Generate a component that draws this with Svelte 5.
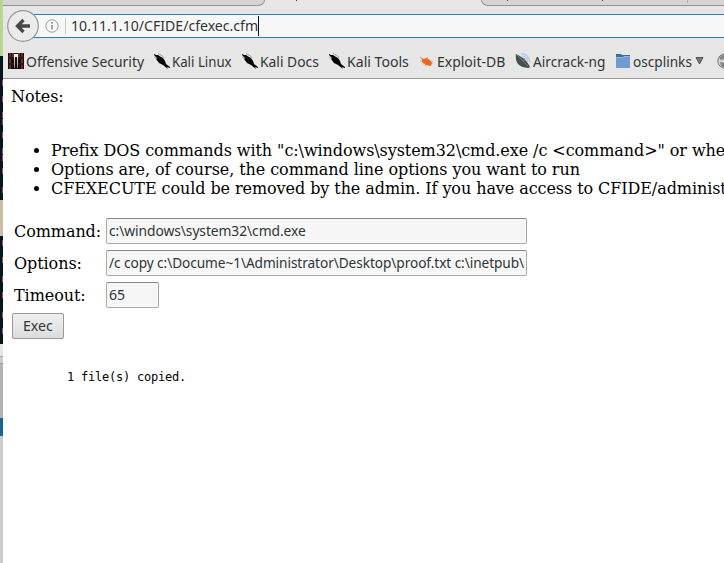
<script>
  const bookmarks = [
    { label: 'Offensive Security', icon: 'offsec', width: 118, gap: 10 },
    { label: 'Kali Linux', icon: 'dragon', width: 60, gap: 10 },
    { label: 'Kali Docs', icon: 'dragon', width: 59, gap: 10 },
    { label: 'Kali Tools', icon: 'dragon', width: 62, gap: 10 },
    { label: 'Exploit-DB', icon: 'bug', width: 68, gap: 10 },
    { label: 'Aircrack-ng', icon: 'dish', width: 72, gap: 10 },
    { label: 'oscplinks', icon: 'folder', width: 59, gap: 3 }
  ];
  const fields = [
    { label: 'Command:', value: 'c:\\windows\\system32\\cmd.exe', width: 421, text: 197 },
    { label: 'Options:', value: '/c copy c:\\Docume~1\\Administrator\\Desktop\\proof.txt c:\\inetpub\\', width: 421, text: 415 },
    { label: 'Timeout:', value: '65', width: 53, text: 16 }
  ];
  const stripes = [80, 96, 112, 119, 132, 148, 155, 168, 187, 240, 257, 276, 292, 312, 328];

  // Condenses a label horizontally to the given width.
  function fit(node, width) {
    const apply = () => {
      node.style.transform = 'none';
      node.style.transform = `scaleX(${width / node.offsetWidth})`;
    };
    apply();
    document.fonts?.ready.then(apply);
  }
</script>

<div class="desktop">
  <div class="behind">
    {#each stripes as y}<i style="top:{y}px"></i>{/each}
  </div>
  <main class="window">
    <header class="chrome">
      <div class="tabs">
        <div class="tab first"></div>
        <div class="active"><i></i></div>
        <div class="tab last"><i class="p1"></i><i class="p2"></i><i class="sep"></i></div>
      </div>
      <div class="nav">
        <div class="back">
          <svg width="32" height="32" viewBox="0 0 32 32"><circle cx="16" cy="16" r="15.3" fill="#ebebeb" stroke="#969696" stroke-width="1.2" /><path d="M16.5 10 10.5 16l6 6M11 16h12" fill="none" stroke="#484848" stroke-width="3.3" /></svg>
        </div>
        <div class="url">
          <svg class="info" width="14" height="14" viewBox="0 0 14 14"><circle cx="7" cy="7" r="6.2" fill="none" stroke="#999" /><path d="M7 6v4.5M7 3v1.700" stroke="#888" stroke-width="1.5" /></svg>
          <i class="divider"></i>
          <span class="slot" style="width:187px"><span class="fit" use:fit={187}>10.11.1.10/CFIDE/cfexec.cfm</span></span><i class="caret"></i>
        </div>
      </div>
      <div class="bookmarks">
        {#each bookmarks as b}
          <div class="bookmark" style="margin-right:{b.gap}px">
            <svg width="16" height="16" viewBox="0 0 16 16">
              {#if b.icon === 'offsec'}
                <path fill="#1b0808" d="M0 0h16v16H0z" /><path d="M2 0v16M5 0v4M11 0v4M14 0v16" stroke="#753c38" stroke-width="1.5" /><path d="M0 5h16M0 11h16" stroke="#301414" stroke-width="2" /><path fill="#eee" d="M6 1h4v14H6z" /><path fill="#111" d="M7 4h2l.5 11h-3z" />
              {:else if b.icon === 'dragon'}
                <path d="M0 1l2 1 2 0 3 2 2 1 2 3 1 3 4 3v1l-3-1 1 2-5-4-4-2-3-4 1-1-3-3z" fill="#050505" /><path d="m4 .5 4 2 2 2.500M0 4l3 2" stroke="#777" fill="none" stroke-width=".6" />
              {:else if b.icon === 'bug'}
                <path d="m2 5 3 1 2-1 4 2 2 3-1 3-5-1-4-3v-2z" fill="#ed6518" /><path d="M1 4l3 2M1 8h3M4 11l2-1M6 13l1-2M8 4l1 3M12 8h2M12 10l2 1" stroke="#e98855" stroke-width=".8" />
              {:else if b.icon === 'dish'}
                <path d="M6 1q7-1 9 8M7 3q5 0 6 6M7 5q3 0 4 4" stroke="#a9c3ed" stroke-width="1.2" fill="none" /><path d="M1 1Q-1 14 13 15q3 0 1-3Q10 5 1 1z" fill="#46504b" /><path d="m2 2 11 11M8 9l2-4" stroke="#7d8781" stroke-width=".8" />
              {:else}
                <path d="M1 1h5l1 1h8v4H1z" fill="#426b91" /><path d="M1 4h7l1-1h6v12H1z" fill="#719bcf" /><path d="M1 4.500h7l1-1h6" stroke="#91b4dc" fill="none" />
              {/if}
            </svg>
            <span class="slot" style="width:{b.width}px"><span class="fit" use:fit={b.width}>{b.label}</span></span>
          </div>
        {/each}
        <svg class="arrow" width="9" height="8" viewBox="0 0 9 8"><path d="M1 .5h7L4.500 7z" fill="#777" stroke="#555" /></svg>
        <svg class="globe" width="16" height="16" viewBox="0 0 16 16"><circle cx="8" cy="8" r="7.2" fill="#d6d6d6" stroke="#777" /><path d="M2 5q4-5 8-3L7 6 4 7zM3 9l6 1-2 5-3-2z" fill="#858585" /></svg>
      </div>
    </header>
    <section class="page">
      <div class="notes">Notes:</div>
      <ul>
        <li>Prefix DOS commands with "c:\windows\system32\cmd.exe /c &lt;command&gt;" or wherever cmd.exe is</li>
        <li>Options are, of course, the command line options you want to run</li>
        <li>CFEXECUTE could be removed by the admin. If you have access to CFIDE/administrator</li>
      </ul>
      {#each fields as f}
        <div class="row">
          <span class="label">{f.label}</span>
          <div class="input" style="width:{f.width}px"><span class="slot" style="width:{f.text}px"><span class="fit" use:fit={f.text}>{f.value}</span></span></div>
        </div>
      {/each}
      <button><span class="slot" style="width:30px"><span class="fit" use:fit={30}>Exec</span></span></button>
      <pre>1 file(s) copied.</pre>
    </section>
  </main>
</div>

<style>
  :global(body) { margin: 0; overflow: hidden; }
  .desktop { width: 724px; height: 563px; display: flex; overflow: hidden; background: #fff; }
  .behind { position: relative; width: 3px; flex: none; background: linear-gradient(#b9d394 0 56px, #07151c 56px 200px, #cbbda5 200px 236px, #07151c 236px 344px, #e5e5e5 344px 356px, #aaa 356px 357px, #ccc 357px 363px, #999 363px 364px, #b3b3b3 364px 418px, #176596 418px 436px, #ccc 436px); }
  .behind i { position: absolute; left: 2px; width: 1px; height: 6px; background: #a54650; }
  .window { width: 721px; flex: none; overflow: hidden; }
  .chrome { height: 79px; box-sizing: border-box; background: #e6e6e6; border-bottom: 1px solid #9a9a9a; }
  .tabs { height: 6px; display: flex; overflow: hidden; }
  .tab { box-sizing: border-box; background: #d5d5d5; border-bottom: 1px solid #929292; position: relative; }
  .first { width: 262px; border-right: 1px solid #929292; border-bottom-right-radius: 7px 6px; }
  .active { width: 216px; position: relative; }
  .last { width: 243px; border-left: 1px solid #929292; border-bottom-left-radius: 7px 6px; }
  .active i, .p1, .p2 { position: absolute; top: 0; width: 1px; height: 1px; background: #444; }
  .active i { left: 31px; }
  .p1 { left: 25px; } .p2 { left: 120px; }
  .sep { position: absolute; left: 205px; top: 0; width: 1px; height: 3px; background: #aaa; }
  .nav { height: 38px; display: flex; }
  .back { width: 32px; height: 32px; margin: 4px -7px 0 4px; position: relative; z-index: 1; }
  .back svg { display: block; }
  .url { flex: 1; height: 24px; box-sizing: border-box; margin-top: 8px; border: solid #2382b9; border-width: 1px 0; background: #f7f7f7; display: flex; align-items: center; padding-left: 13px; }
  .info { margin-right: 6px; flex: none; }
  .divider { width: 1px; height: 16px; background: #ccc; margin-right: 5px; }
  .caret { width: 1px; height: 20px; background: #111; }
  .slot { display: inline-block; flex: none; white-space: nowrap; height: 20px; }
  .fit { display: block; width: max-content; transform-origin: 0 50%; font: 15px/18px "Noto Sans", sans-serif; color: #303536; white-space: pre; }
  .bookmarks { height: 34px; padding: 0 0 0 5px; display: flex; align-items: center; box-sizing: border-box; overflow: hidden; }
  .bookmark { display: flex; align-items: center; gap: 2px; flex: none; }
  .bookmark svg { flex: none; }
  .bookmark .fit { line-height: 20px; }
  .arrow { flex: none; margin-right: 13px; }
  .globe { flex: none; }
  .page { padding: 8px 8px 0; font: 16px/19px "DejaVu Serif", serif; letter-spacing: -.075px; color: #000; }
  ul { margin: 35px 0 20px; padding-left: 40px; white-space: nowrap; }
  .row { display: flex; align-items: center; height: 26px; margin-bottom: 6px; padding-left: 3px; }
  .label { width: 92px; }
  .input { height: 26px; box-sizing: border-box; border: 1px solid #aaa; border-top-color: #858585; border-radius: 2px; background: #f6f6f6; padding: 2px; overflow: hidden; }
  .input .slot, button .slot { display: block; }
  button { display: block; width: 52px; height: 26px; margin: -1px 0 0 1px; padding: 2px 10px; border: 1px solid #999; border-radius: 2px; background: linear-gradient(#efefef, #dcdcdc); text-align: left; box-sizing: border-box; }
  pre { margin: 31px 0 0 56px; font: 12px/14px "DejaVu Sans Mono", monospace; letter-spacing: -.22px; }
</style>
